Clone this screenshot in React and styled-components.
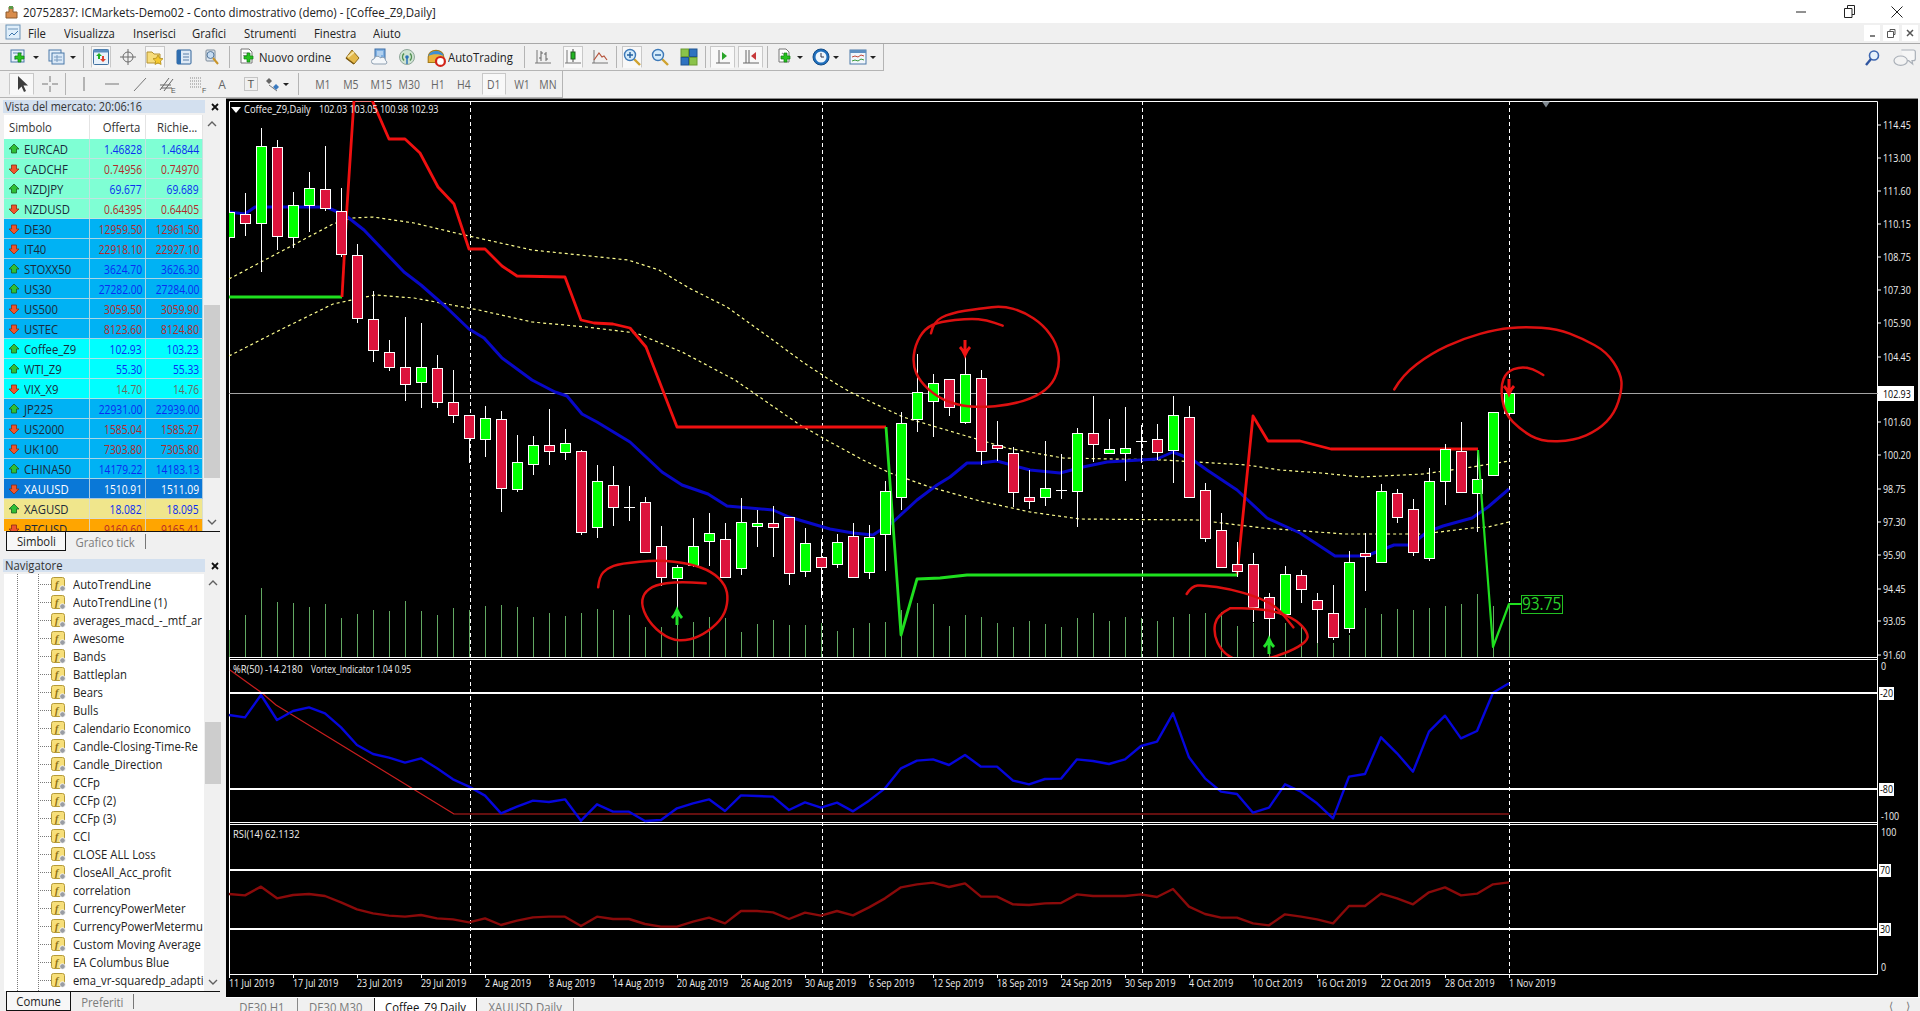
import React from "react";
import styled, { createGlobalStyle } from "styled-components";

const UI_FONT = `"Open Sans", "Noto Sans", sans-serif`;

const GlobalStyle = createGlobalStyle`
  html, body {
    margin: 0;
    padding: 0;
    background: #f0f0f0;
    font-family: ${UI_FONT};
    overflow: hidden;
  }
`;

/* ---------- data ---------- */

const WATCH = [
  ["EURCAD", "1.46828", "1.46844", "up", "mint"],
  ["CADCHF", "0.74956", "0.74970", "down", "mint"],
  ["NZDJPY", "69.677", "69.689", "up", "mint"],
  ["NZDUSD", "0.64395", "0.64405", "down", "mint"],
  ["DE30", "12959.50", "12961.50", "down", "sky"],
  ["IT40", "22918.10", "22927.10", "down", "sky"],
  ["STOXX50", "3624.70", "3626.30", "up", "sky"],
  ["US30", "27282.00", "27284.00", "up", "sky"],
  ["US500", "3059.50", "3059.90", "down", "sky"],
  ["USTEC", "8123.60", "8124.80", "down", "sky"],
  ["Coffee_Z9", "102.93", "103.23", "up", "aqua"],
  ["WTI_Z9", "55.30", "55.33", "up", "aqua"],
  ["VIX_X9", "14.70", "14.76", "flat", "aqua"],
  ["JP225", "22931.00", "22939.00", "up", "sky"],
  ["US2000", "1585.04", "1585.27", "down", "sky"],
  ["UK100", "7303.80", "7305.80", "down", "sky"],
  ["CHINA50", "14179.22", "14183.13", "up", "sky"],
  ["XAUUSD", "1510.91", "1511.09", "sel", "selected"],
  ["XAGUSD", "18.082", "18.095", "up", "khaki"],
  ["BTCUSD", "9160.60", "9165.41", "down", "orange"],
];

const NAV_ITEMS = [
  "AutoTrendLine", "AutoTrendLine (1)", "averages_macd_-_mtf_ar", "Awesome", "Bands", "Battleplan",
  "Bears", "Bulls", "Calendario Economico", "Candle-Closing-Time-Re", "Candle_Direction", "CCFp",
  "CCFp (2)", "CCFp (3)", "CCI", "CLOSE ALL Loss", "CloseAll_Acc_profit", "correlation",
  "CurrencyPowerMeter", "CurrencyPowerMetermu", "Custom Moving Average", "EA Columbus Blue",
  "ema_vr-squaredp_adapti", "Envelopes",
];

const barX = (i) => 229 + 16 * i;

// [high, bodyTop, bodyBottom, low, kind]
const CANDLES = [
  [205, 212, 237, 243, "g"], [193, 214, 223, 236, "r"], [128, 146, 223, 272, "g"], [140, 147, 236, 250, "r"],
  [192, 205, 237, 248, "g"], [172, 188, 205, 232, "g"], [146, 189, 208, 211, "r"], [188, 211, 254, 257, "r"],
  [244, 255, 318, 323, "r"], [291, 319, 350, 362, "r"], [340, 352, 367, 371, "r"], [317, 367, 384, 401, "r"],
  [323, 367, 382, 408, "g"], [355, 368, 402, 408, "r"], [370, 402, 415, 423, "r"], [415, 415, 438, 463, "r"],
  [406, 418, 439, 457, "g"], [411, 419, 488, 512, "r"], [435, 462, 489, 492, "g"], [436, 445, 464, 475, "g"],
  [409, 445, 451, 465, "r"], [429, 443, 452, 460, "g"], [450, 451, 532, 535, "r"], [465, 481, 527, 538, "g"],
  [466, 485, 507, 526, "r"], [486, 507, 507, 521, "d"], [497, 502, 552, 553, "r"], [526, 546, 577, 586, "r"],
  [565, 567, 578, 612, "g"], [518, 546, 565, 567, "g"], [513, 533, 541, 566, "g"], [523, 539, 577, 577, "r"],
  [498, 522, 568, 575, "g"], [510, 523, 526, 547, "g"], [506, 523, 527, 557, "r"], [517, 517, 573, 585, "r"],
  [528, 543, 571, 577, "g"], [539, 557, 567, 598, "r"], [534, 542, 564, 568, "g"], [523, 536, 577, 578, "r"],
  [525, 537, 572, 579, "g"], [481, 491, 534, 571, "g"], [412, 423, 497, 510, "g"], [354, 392, 419, 432, "g"],
  [374, 383, 401, 437, "g"], [379, 379, 407, 416, "r"], [350, 374, 422, 424, "g"], [370, 378, 451, 465, "r"],
  [421, 445, 448, 461, "r"], [447, 453, 492, 507, "r"], [470, 497, 501, 509, "r"], [441, 488, 497, 506, "g"],
  [454, 490, 490, 499, "d"], [428, 433, 491, 527, "g"], [396, 433, 444, 462, "r"], [419, 449, 453, 453, "g"],
  [407, 448, 453, 481, "g"], [425, 441, 441, 463, "d"], [424, 439, 452, 460, "r"], [396, 415, 450, 483, "g"],
  [406, 417, 497, 498, "r"], [483, 490, 538, 542, "r"], [513, 530, 567, 567, "r"], [542, 564, 571, 577, "r"],
  [553, 564, 607, 622, "r"], [593, 597, 618, 638, "r"], [566, 574, 614, 615, "g"], [570, 575, 589, 603, "r"],
  [593, 600, 609, 643, "r"], [585, 613, 637, 640, "r"], [551, 562, 628, 633, "g"], [533, 553, 556, 591, "r"],
  [484, 491, 562, 563, "g"], [489, 493, 517, 523, "r"], [499, 509, 552, 556, "r"], [468, 481, 558, 561, "g"],
  [444, 449, 481, 505, "g"], [422, 451, 492, 493, "r"], [450, 479, 493, 532, "g"], [412, 412, 475, 475, "g"],
  [388, 393, 413, 440, "g"],
];

const VOLUME = [
  630, 615, 588, 602, 603, 607, 604, 618, 614, 610, 611, 601, 611, 615, 608, 610, 606, 605, 607, 617, 613,
  616, 613, 609, 610, 615, 627, 627, 623, 622, 617, 618, 632, 624, 620, 625, 625, 623, 631, 628, 623, 622,
  610, 603, 604, 626, 615, 617, 623, 627, 621, 624, 627, 618, 613, 621, 617, 618, 621, 617, 614, 613, 612,
  626, 623, 620, 623, 625, 643, 643, 635, 608, 614, 609, 610, 608, 606, 604, 594, 606, 605,
];

const BLUE_MA = [
  [229, 212], [245, 214], [255, 207], [268, 207], [326, 207], [345, 215], [364, 230], [404, 272], [421, 285],
  [446, 307], [469, 329], [484, 338], [502, 358], [532, 380], [555, 392], [567, 396], [582, 414], [597, 422],
  [630, 442], [662, 472], [682, 485], [708, 494], [727, 506], [773, 510], [789, 517], [830, 529], [853, 533],
  [873, 535], [893, 522], [917, 500], [937, 485], [950, 477], [967, 463], [980, 463], [997, 461], [1030, 470],
  [1060, 473], [1083, 467], [1107, 462], [1157, 459], [1173, 452], [1193, 460], [1207, 470], [1237, 490],
  [1267, 518], [1300, 533], [1335, 556], [1366, 556], [1394, 545], [1411, 545], [1427, 532], [1443, 526],
  [1472, 518], [1488, 507], [1509, 489],
];

const YELLOW_UP = [
  [229, 279], [261, 262], [333, 224], [352, 218], [373, 217], [414, 223], [460, 234], [532, 250], [628, 260],
  [659, 270], [689, 288], [727, 307], [766, 335], [804, 363], [830, 380], [850, 392], [903, 417], [963, 435],
  [1007, 448], [1063, 458], [1163, 460], [1247, 465], [1280, 470], [1321, 473], [1361, 477], [1423, 474],
  [1472, 467], [1509, 461],
];

const YELLOW_LOW = [
  [229, 356], [280, 330], [333, 304], [375, 295], [414, 298], [479, 310], [532, 322], [586, 327], [636, 333],
  [682, 352], [735, 380], [800, 425], [830, 442], [863, 460], [890, 473], [930, 487], [980, 501], [1030, 512],
  [1080, 519], [1197, 520], [1263, 528], [1345, 534], [1423, 534], [1472, 528], [1488, 527], [1509, 522],
];

const RED_TRAIL_A = [
  [347, 207], [354, 100], [372, 100], [389, 139], [405, 139], [420, 153], [438, 187], [454, 204], [469, 249],
  [485, 249], [502, 266], [517, 276], [565, 277], [581, 320], [594, 323], [613, 324], [630, 328], [646, 347],
  [677, 427], [886, 427],
];
const RED_TRAIL_B = [
  [1237, 575], [1253, 416], [1268, 441], [1300, 441], [1331, 449], [1478, 449],
];
const GREEN_TRAIL_A = [[229, 297], [342, 297], [347, 207]];
const GREEN_TRAIL_B = [[886, 427], [901, 635], [917, 579], [940, 578], [967, 575], [1237, 575]];
const GREEN_TRAIL_C = [[1478, 450], [1493, 647], [1509, 604], [1521, 604]];

const WPR_Y = [
  195, 202, 135, 210, 183, 172, 190, 232, 285, 312, 323, 338, 325, 355, 388, 410, 437, 490, 470, 452, 456,
  448, 512, 463, 485, 485, 513, 510, 475, 460, 448, 483, 436, 438, 440, 480, 457, 473, 458, 484, 452, 415,
  355, 332, 328, 345, 315, 350, 350, 392, 403, 387, 386, 328, 333, 342, 328, 288, 275, 190, 322, 385, 425,
  432, 488, 473, 403, 425, 460, 505, 380, 372, 262, 310, 365, 245, 197, 265, 243, 128, 100,
];

const RSI_Y = [
  732, 736, 710, 745, 735, 732, 738, 757, 778, 790, 797, 800, 795, 805, 808, 817, 805, 825, 812, 802, 800,
  800, 828, 800, 807, 807, 822, 830, 830, 815, 803, 820, 783, 783, 787, 807, 788, 797, 783, 796, 772, 745,
  712, 703, 698, 711, 700, 740, 740, 763, 765, 760, 759, 733, 738, 738, 738, 733, 741, 717, 770, 792, 803,
  803, 820, 826, 793, 800, 808, 820, 768, 768, 731, 745, 763, 727, 712, 736, 731, 703, 697,
];

const PRICE_TICKS = [
  ["114.45", 125], ["113.00", 158], ["111.60", 191], ["110.15", 224], ["108.75", 257], ["107.30", 290],
  ["105.90", 323], ["104.45", 357], ["101.60", 422], ["100.20", 455], ["98.75", 489], ["97.30", 522],
  ["95.90", 555], ["94.45", 589], ["93.05", 621], ["91.60", 655],
];

const DATES = [
  "11 Jul 2019", "17 Jul 2019", "23 Jul 2019", "29 Jul 2019", "2 Aug 2019", "8 Aug 2019", "14 Aug 2019",
  "20 Aug 2019", "26 Aug 2019", "30 Aug 2019", "6 Sep 2019", "12 Sep 2019", "18 Sep 2019", "24 Sep 2019",
  "30 Sep 2019", "4 Oct 2019", "10 Oct 2019", "16 Oct 2019", "22 Oct 2019", "28 Oct 2019", "1 Nov 2019",
];

// crop coordinates read off the zoomed picture -> page coordinates
const crop = (ox, oy, sx, list) => list.map(([x, y]) => [ox + x / sx, oy + y / 3]);

const INK_1 = crop(230, 380, 2.613, [
  [962, 622], [965, 590], [985, 565], [1020, 550], [1120, 540], [1200, 550], [1260, 575], [1295, 615], [1302, 660],
  [1290, 710], [1250, 755], [1200, 782], [1150, 780], [1100, 735], [1075, 680], [1080, 640], [1110, 615], [1170, 605], [1243, 610],
]);
const INK_2 = crop(830, 290, 3, [
  [303, 130], [310, 95], [360, 70], [450, 55], [520, 48], [580, 65], [640, 105], [680, 160], [690, 220], [670, 280],
  [620, 320], [540, 345], [450, 352], [380, 345], [320, 320], [270, 275], [248, 225], [255, 165], [285, 115], [330, 95],
  [420, 85], [470, 90], [518, 107],
]);
const INK_3A = crop(830, 290, 3, [
  [1070, 912], [1085, 888], [1120, 885], [1200, 897], [1280, 920], [1340, 950], [1390, 1012],
]);
const INK_3B = crop(830, 290, 3, [
  [1200, 955], [1160, 975], [1150, 1030], [1175, 1085], [1225, 1115], [1300, 1110], [1380, 1085], [1430, 1055],
  [1435, 1030], [1400, 990], [1340, 965], [1270, 955], [1200, 955],
]);
const INK_4 = crop(1280, 290, 2.45, [
  [280, 298], [300, 255], [370, 190], [450, 145], [530, 118], [600, 110], [680, 117], [740, 145], [800, 185], [835, 250],
  [838, 300], [820, 370], [780, 420], [720, 452], [640, 455], [590, 420], [550, 370], [540, 290], [555, 245], [590, 230],
  [620, 237], [645, 255],
]);

const toPoints = (list) => list.map((p) => p.join(",")).join(" ");

const smoothPath = (list) => {
  let d = `M${list[0][0]} ${list[0][1]}`;
  for (let i = 1; i < list.length - 1; i++) {
    const mx = (list[i][0] + list[i + 1][0]) / 2;
    const my = (list[i][1] + list[i + 1][1]) / 2;
    d += ` Q${list[i][0]} ${list[i][1]} ${mx} ${my}`;
  }
  const last = list[list.length - 1];
  return `${d} L${last[0]} ${last[1]}`;
};

/* ---------- icons ---------- */

const Ico = ({ children, size = 18 }) => (
  <svg width={size} height={size} viewBox="0 0 18 18" fill="none" style={{ flex: "none" }}>
    {children}
  </svg>
);

const Plus = ({ x = 9, y = 9 }) => (
  <path
    d={`M${x + 3} ${y}h3v3h3v3h-3v3h-3v-3h-3v-3h3z`}
    fill="#27c21f"
    stroke="#0e7f12"
    strokeWidth=".7"
  />
);

const NewChartIcon = () => (
  <Ico>
    <rect x="1" y="2" width="13" height="12" fill="#e6f0fa" stroke="#4a78a8" />
    <path d="M3 5h9M5 8v4M9 7v4" stroke="#5a86b0" />
    <Plus x={5} y={5} />
  </Ico>
);
const ProfilesIcon = () => (
  <Ico>
    <rect x="1" y="2" width="12" height="11" fill="#e6f0fa" stroke="#4a78a8" />
    <rect x="4" y="5" width="12" height="11" fill="#d9e8f7" stroke="#4a78a8" />
    <path d="M6 9h8M6 12h8M9 7v7" stroke="#7a9cc0" />
  </Ico>
);
const WatchIcon = () => (
  <Ico>
    <rect x="1.5" y="1.5" width="15" height="15" rx="1" fill="#e8f2fb" stroke="#3f6f9f" />
    <rect x="1.5" y="1.5" width="15" height="3" fill="#5d8fc0" />
    <path d="M7 5l3 3H8v3H6V8H4z" fill="#20b020" />
    <path d="M11 14l-3-3h2V8h2v3h2z" fill="#e0402a" />
  </Ico>
);
const CrossIcon = ({ color = "#6c6c6c" }) => (
  <Ico>
    <circle cx="9" cy="9" r="5" stroke={color} />
    <path d="M9 1v16M1 9h16" stroke={color} />
  </Ico>
);
const FolderStarIcon = () => (
  <Ico>
    <path d="M1 4h5l2 2h6v9H1z" fill="#f7dd7c" stroke="#b49232" />
    <path d="M12 7l1.6 3.2 3.4.5-2.5 2.4.6 3.4-3.1-1.6-3 1.6.6-3.4L7 10.7l3.4-.5z" fill="#f5c92f" stroke="#a98415" strokeWidth=".7" />
  </Ico>
);
const TerminalIcon = () => (
  <Ico>
    <rect x="2" y="2" width="14" height="14" rx="1" fill="#dfeaf6" stroke="#2f6299" />
    <rect x="2" y="2" width="4" height="14" fill="#2f6eb0" />
    <path d="M8 6h6M8 9h6M8 12h6" stroke="#5a7fa8" />
  </Ico>
);
const TesterIcon = () => (
  <Ico>
    <rect x="3" y="2" width="9" height="11" rx="1" fill="#dde4ec" stroke="#7b8a99" />
    <circle cx="7.5" cy="7" r="3.5" fill="#c6dcf2" stroke="#55789c" />
    <path d="M10 10l5 6" stroke="#c9952a" strokeWidth="2" />
  </Ico>
);
const OrderIcon = () => (
  <Ico>
    <path d="M2 1h8l3 3v11H2z" fill="#fff" stroke="#777" />
    <path d="M4 5h6M4 7.5h6" stroke="#999" />
    <Plus x={5} y={5} />
  </Ico>
);
const EditorIcon = () => (
  <Ico>
    <path d="M9 2l7 8-5 6-8-6z" fill="#e4b84a" stroke="#8c6a1c" />
    <path d="M5 9l6-5" stroke="#f6e2a0" strokeWidth="2" />
    <path d="M3 10l8 6" stroke="#7c5a12" strokeWidth="1.5" />
  </Ico>
);
const CloudIcon = () => (
  <Ico>
    <rect x="4" y="1" width="10" height="10" fill="#7fb0e2" stroke="#3e6ea5" />
    <path d="M6 4h6M6 6h6M6 8h4" stroke="#e8f2fb" />
    <path d="M3 16a2.5 2.5 0 010-5 3.5 3.5 0 016.5-1 3 3 0 015 2.5 2 2 0 01.5 3.5z" fill="#f4f7fa" stroke="#8e9fb1" />
  </Ico>
);
const SignalIcon = () => (
  <Ico>
    <circle cx="9" cy="9" r="7.5" fill="#cfe3d1" stroke="#8fa69a" />
    <path d="M6 5.5a5 5 0 000 7M12 5.5a5 5 0 010 7" stroke="#4f8f4f" strokeWidth="1.5" />
    <circle cx="9" cy="9" r="1.8" fill="#2c72b8" />
    <path d="M9 10v6" stroke="#2c72b8" strokeWidth="1.5" />
  </Ico>
);
const AutoTradeIcon = () => (
  <Ico size={20}>
    <path d="M2 9a7 6 0 0114 0v5H2z" fill="#e9b33c" stroke="#a57a18" />
    <path d="M2 8c2-6 12-6 14 0-4-2-10-2-14 0z" fill="#3d8fd4" />
    <circle cx="13" cy="13" r="4" fill="#fff" stroke="#d2241a" strokeWidth="2" />
  </Ico>
);
const Axes = () => <path d="M3 2v13M1 15h16" stroke="#777" />;
const BarsIcon = () => (
  <Ico>
    <Axes />
    <path d="M7 3v10M5 10h2M7 5h2M12 4v9M10 6h2M12 11h2" stroke="#666" />
  </Ico>
);
const CandleIcon = () => (
  <Ico>
    <Axes />
    <path d="M9 1v13" stroke="#444" />
    <rect x="7" y="4" width="4" height="7" fill="#21b521" stroke="#1f5e1f" />
  </Ico>
);
const LineIcon = () => (
  <Ico>
    <Axes />
    <path d="M3 12l5-7 3 4 2-1 3 4" stroke="#b5533a" strokeWidth="1.2" />
  </Ico>
);
const ZoomIcon = ({ plus }) => (
  <Ico>
    <path d="M11 11l6 6" stroke="#cfa22f" strokeWidth="2.4" />
    <circle cx="7" cy="7" r="5.5" fill="#d5ecfb" stroke="#3d79b8" strokeWidth="1.4" />
    <path d={plus ? "M4 7h6M7 4v6" : "M4 7h6"} stroke="#2460a0" strokeWidth="1.4" />
  </Ico>
);
const TileIcon = () => (
  <Ico>
    <rect x="1" y="1" width="7.5" height="7.5" fill="#8bc34a" stroke="#6a9a32" />
    <rect x="9.5" y="1" width="7.5" height="7.5" fill="#2f73c0" stroke="#22568f" />
    <rect x="1" y="9.5" width="7.5" height="7.5" fill="#2f73c0" stroke="#22568f" />
    <rect x="9.5" y="9.5" width="7.5" height="7.5" fill="#8bc34a" stroke="#6a9a32" />
  </Ico>
);
const ScrollIcon = () => (
  <Ico>
    <path d="M5 2v13M2 15h14" stroke="#666" />
    <path d="M8 4l5 4-5 4z" fill="#2aa52a" />
  </Ico>
);
const ShiftIcon = () => (
  <Ico>
    <path d="M4 2v13M7 2v13M1 15h16" stroke="#666" />
    <path d="M14 4l-5 4 5 4z" fill="#c6383a" />
  </Ico>
);
const IndicatorIcon = () => (
  <Ico>
    <path d="M2 1h7l3 3v10H2z" fill="#fff" stroke="#777" />
    <path d="M5 6c1-3 2 3 3 0" stroke="#777" />
    <Plus x={4} y={5} />
  </Ico>
);
const ClockIcon = () => (
  <Ico>
    <circle cx="9" cy="9" r="8" fill="#1f6fbd" stroke="#134c86" />
    <circle cx="9" cy="9" r="5.5" fill="#eef6fc" />
    <path d="M9 5v4h3" stroke="#334" />
  </Ico>
);
const TemplateIcon = () => (
  <Ico>
    <rect x="1" y="2" width="16" height="14" fill="#f1f6fb" stroke="#4a78a8" />
    <rect x="1" y="2" width="16" height="3" fill="#5d8fc0" />
    <path d="M3 9l3-1 3 1 3-2 3 1" stroke="#c24a3a" />
    <path d="M3 13l3-1 3 1 3-2 3 1" stroke="#3a9a3a" />
  </Ico>
);
const ArrowToolIcon = () => (
  <Ico>
    <path d="M5 1v14l3.5-3.5 2.5 5.5 2-1-2.5-5.5H15z" fill="#3d3d3d" />
  </Ico>
);
const CrossThinIcon = () => (
  <Ico>
    <path d="M9 1v6M9 11v6M1 9h6M11 9h6" stroke="#777" />
  </Ico>
);
const VLineIcon = () => (
  <Ico>
    <path d="M9 2v14" stroke="#777" />
  </Ico>
);
const HLineIcon = () => (
  <Ico>
    <path d="M2 9h14" stroke="#777" />
  </Ico>
);
const TrendIcon = () => (
  <Ico>
    <path d="M3 16L15 3" stroke="#777" />
  </Ico>
);
const ChannelIcon = () => (
  <Ico>
    <path d="M2 15L11 3M6 16L15 4M2 10h11M3 13h11" stroke="#666" />
    <text x="13" y="17.5" fontSize="7" fill="#555" fontFamily="Liberation Sans">E</text>
  </Ico>
);
const FiboIcon = () => (
  <Ico>
    <path d="M1 3h12M1 6h12M1 9h12M1 12h12" stroke="#888" strokeDasharray="1 1" />
    <text x="13" y="17.5" fontSize="7" fill="#555" fontFamily="Liberation Sans">F</text>
  </Ico>
);
const TextBoxIcon = () => (
  <Ico>
    <path d="M2.5 2.5h13v13h-13z" stroke="#999" strokeDasharray="1 1" />
    <text x="5.500" y="13" fontSize="11" fill="#555" fontFamily="Liberation Sans">T</text>
  </Ico>
);
const ShapesIcon = () => (
  <Ico>
    <path d="M5 3l3 3-3 3-3-3z" fill="#666" />
    <path d="M5 10l8 6" stroke="#777" />
    <path d="M12 9l3 3-3 3-3-3z" fill="#3a7abf" />
  </Ico>
);
const AppIcon = () => (
  <Ico>
    <path d="M3 15V9h3V4h4v5h4v6z" fill="#d98c4c" stroke="#8a5a2e" />
    <path d="M6 3h4v3H6z" fill="#5a9a4a" />
  </Ico>
);
const ChartDocIcon = () => (
  <Ico>
    <rect x="1" y="1" width="14" height="14" fill="#dfeefa" stroke="#6d93b8" />
    <path d="M3 5h10" stroke="#6d93b8" />
    <path d="M4 12l3-3 2 2 4-4" stroke="#3f77ad" />
  </Ico>
);
const SearchIcon = () => (
  <Ico>
    <circle cx="11" cy="6.5" r="4.5" fill="#e6f1fb" stroke="#3d66b0" strokeWidth="1.6" />
    <path d="M8 10l-5 6" stroke="#2f55a0" strokeWidth="2.4" />
  </Ico>
);
const ChatIcon = () => (
  <Ico size={24}>
    <path d="M7 3h9a1.5 1.5 0 011.500 1.500v5A1.500 1.500 0 0116 11h-1l.5 2.5L12.500 11H9" stroke="#aab0b8" fill="#f6f6f6" strokeWidth=".9" />
    <ellipse cx="6.5" cy="11" rx="5" ry="3.5" fill="#f3f3f3" stroke="#aab0b8" strokeWidth=".9" />
  </Ico>
);
const TickArrow = ({ dir }) => (
  <svg width="12" height="12" viewBox="0 0 12 12" style={{ flex: "none" }}>
    {dir === "up" ? (
      <path d="M6 1l5 5H8.5v4h-5V6H1z" fill="#2fbf35" stroke="#1a5a22" strokeWidth=".8" />
    ) : (
      <path d="M6 11L1 6h2.5V2h5v4H11z" fill="#f0552b" stroke="#8a2c14" strokeWidth=".8" />
    )}
  </svg>
);
const ScriptIcon = () => (
  <svg width="15" height="15" viewBox="0 0 15 15" style={{ flex: "none" }}>
    <rect x=".5" y=".5" width="13" height="13" rx="2" fill="#f7df7a" stroke="#b59a38" />
    <text x="4" y="10.5" fontSize="10" fontStyle="italic" fontWeight="700" fontFamily="Liberation Serif" fill="#8a6d12">f</text>
    <circle cx="11.5" cy="11.5" r="2.8" fill="#9a9da3" stroke="#fff" strokeWidth=".8" />
  </svg>
);
const CloseMark = () => (
  <svg width="8" height="8" viewBox="0 0 8 8" style={{ flex: "none" }}>
    <path d="M1 1l6 6M7 1l-6 6" stroke="#111" strokeWidth="1.8" />
  </svg>
);
const Chevron = ({ up }) => (
  <svg width="10" height="7" viewBox="0 0 10 7">
    <path d={up ? "M1 6l4-4 4 4" : "M1 1l4 4 4-4"} stroke="#606060" strokeWidth="1.4" fill="none" />
  </svg>
);

/* ---------- window chrome ---------- */

// the screenshot's Tahoma is narrower than any installed face
const Cond = styled.span`
  display: inline-block;
  flex: none;
  white-space: nowrap;
  transform: scaleX(${(p) => p.$x || 0.87});
  transform-origin: ${(p) => p.$o || "left"} center;
`;

const Page = styled.div`
  width: 1920px;
  height: 1011px;
  display: flex;
  flex-direction: column;
  overflow: hidden;
  background: #f0f0f0;
  color: #1a1a1a;
  font-size: 13px;
`;

const TitleBar = styled.div`
  height: 23px;
  background: #fff;
  display: flex;
  align-items: center;
  padding-left: 3px;
  gap: 2px;
`;
const TitleText = styled.span`
  flex: 1;
  color: #222;
`;
const WinButton = styled.div`
  width: 46px;
  height: 23px;
  display: flex;
  align-items: center;
  justify-content: center;
`;

const MenuBar = styled.div`
  height: 21px;
  display: flex;
  align-items: center;
  padding-left: 5px;
  box-sizing: border-box;
  border-bottom: 1px solid #a8a8a8;
`;
const MenuIcon = styled.div`
  width: 23px;
  flex: none;
  display: flex;
`;
const MenuItem = styled.span`
  width: ${(p) => p.$w}px;
  flex: none;
  color: #222;
`;
const MdiButtons = styled.div`
  margin-left: auto;
  display: flex;
  gap: 3px;
  padding-right: 2px;
`;
const MdiButton = styled.div`
  width: 16px;
  height: 16px;
  background: #fff;
  display: flex;
  align-items: center;
  justify-content: center;
`;

const ToolRow = styled.div`
  height: ${(p) => p.$h}px;
  display: flex;
  align-items: center;
`;
const ToolGroup = styled.div`
  height: ${(p) => p.$h}px;
  width: ${(p) => p.$w}px;
  display: flex;
  align-items: center;
  padding-left: ${(p) => p.$pad}px;
  box-sizing: border-box;
  border-right: 1px solid #b4b4b4;
  border-bottom: 1px solid #b4b4b4;
`;
const Tool = styled.div`
  width: ${(p) => p.$w}px;
  margin-left: ${(p) => p.$ml || 0}px;
  height: 22px;
  flex: none;
  display: flex;
  align-items: center;
  justify-content: center;
  box-sizing: border-box;
  color: #666;
  font-size: 12px;
  ${(p) => p.$on && "background: #f8f8f8; border: 1px solid #c8c8c8; border-bottom-color: #f8f8f8;"}
`;
const ToolText = styled.div`
  width: ${(p) => p.$w}px;
  flex: none;
  margin-left: ${(p) => p.$ml || 0}px;
  color: #222;
`;
const Caret = styled.span`
  width: 0;
  height: 0;
  flex: none;
  margin-left: ${(p) => p.$ml || 2}px;
  border-left: 3px solid transparent;
  border-right: 3px solid transparent;
  border-top: 3px solid #222;
`;
const ToolSep = styled.div`
  width: 1px;
  height: 22px;
  background: #b4b4b4;
  flex: none;
  margin-left: ${(p) => p.$ml || 0}px;
`;
const RightTools = styled.div`
  margin-left: auto;
  display: flex;
  align-items: center;
  gap: 11px;
  padding-right: 4px;
`;

/* ---------- side panels ---------- */

const Body = styled.div`
  flex: 1;
  display: flex;
  min-height: 0;
`;
const Sidebar = styled.div`
  width: 226px;
  flex: none;
  display: flex;
  flex-direction: column;
  padding-top: 2px;
  box-sizing: border-box;
`;
const PanelTitle = styled.div`
  height: 13px;
  display: flex;
  align-items: center;
  justify-content: space-between;
  padding: 0 7px 0 4px;
  color: #333;
`;
const TitleFill = styled.span`
  flex: 1;
  margin-right: 6px;
  background: #d3e0ef;
  line-height: 13px;
  margin-left: -1px;
  padding-left: 2px;
`;
const WatchBox = styled.div`
  height: 416px;
  margin-top: 2px;
  display: flex;
  padding-left: 4px;
  overflow: hidden;
`;
const WatchTable = styled.div`
  width: 199px;
  flex: none;
`;
const WatchHeader = styled.div`
  height: 24px;
  background: #fff;
  display: grid;
  grid-template-columns: 86px 56px 57px;
  color: #333;
`;
const HeadCell = styled.div`
  display: flex;
  align-items: center;
  justify-content: ${(p) => (p.$left ? "flex-start" : "flex-end")};
  padding: 0 5px;
  border-right: 1px solid #e4e4e4;
`;
const WatchRow = styled.div`
  height: 20px;
  display: grid;
  grid-template-columns: 86px 56px 57px;
  box-sizing: border-box;
  border-bottom: 1px solid rgba(210, 220, 225, 0.8);
  background: ${(p) =>
    ({
      mint: "#7fffd4",
      sky: "#00b2f4",
      aqua: "#00ffff",
      selected: "#0a78d7",
      khaki: "#f0e68c",
      orange: "#ffa500",
    })[p.$band]};
  color: ${(p) => (p.$band === "selected" ? "#fff" : "#1b2a3a")};
`;
const SymbolCell = styled.div`
  display: flex;
  align-items: center;
  gap: 4px;
  padding-left: 4px;
  border-right: 1px solid rgba(210, 220, 225, 0.8);
`;
const PriceCell = styled.div`
  display: flex;
  align-items: center;
  justify-content: flex-end;
  padding-right: 3px;
  border-right: 1px solid rgba(210, 220, 225, 0.8);
  color: ${(p) => ({ up: "#0a2df0", down: "#b52a2a", flat: "#6b6b5f", sel: "#fff" })[p.$dir]};
`;
const VScroll = styled.div`
  width: 16px;
  margin-left: 1px;
  flex: none;
  display: flex;
  flex-direction: column;
  align-items: center;
  background: #f0f0f0;
  position: relative;
`;
const ScrollEnd = styled.div`
  height: 17px;
  display: flex;
  align-items: center;
  justify-content: center;
`;
const ScrollThumb = styled.div`
  position: absolute;
  left: 0;
  right: 0;
  top: ${(p) => p.$top}px;
  height: ${(p) => p.$h}px;
  background: #cdcdcd;
`;
const ScrollBottom = styled(ScrollEnd)`
  margin-top: auto;
`;
const PanelTabs = styled.div`
  height: ${(p) => p.$h}px;
  flex: none;
  margin: 0 6px;
  border-top: 1px solid #111;
  display: flex;
  box-sizing: border-box;
`;
const PanelTab = styled.div`
  width: ${(p) => p.$w}px;
  height: 19px;
  box-sizing: border-box;
  display: flex;
  align-items: center;
  justify-content: center;
  background: ${(p) => (p.$active ? "#f7f7f7" : "transparent")};
  color: ${(p) => (p.$active ? "#222" : "#7c7c7c")};
  ${(p) => p.$active && "border: 1px solid #111; border-top: none;"}
  ${(p) => p.$end && "border-right: 1px solid #777; height: 15px; margin-top: 2px;"}
`;
const NavTitle = styled(PanelTitle)`
  margin-top: 7px;
`;
const NavBox = styled.div`
  height: 417px;
  margin-top: 2px;
  display: flex;
  padding-left: 4px;
  overflow: hidden;
`;
const NavList = styled.div`
  width: 200px;
  flex: none;
  background: #fff;
  overflow: hidden;
  position: relative;
  padding-top: 1px;
`;
const NavGuide = styled.div`
  position: absolute;
  top: 0;
  bottom: 0;
  left: ${(p) => p.$x}px;
  border-left: 1px dotted #7a7a7a;
`;
const NavRow = styled.div`
  height: 18px;
  display: flex;
  align-items: center;
  padding-left: 47px;
  color: #222;
  white-space: nowrap;
  position: relative;
  &::before {
    content: "";
    position: absolute;
    left: 34px;
    width: 13px;
    border-top: 1px dotted #7a7a7a;
  }
`;
const NavLabel = styled(Cond)`
  margin-left: 7px;
`;

/* ---------- chart ---------- */

const ChartColumn = styled.div`
  flex: 1;
  display: flex;
  flex-direction: column;
  min-width: 0;
`;
const ChartFrame = styled.div`
  height: 899px;
  flex: none;
  background: #000;
  margin-right: 2px;
  border-top: 1px solid #8a8a8a;
  box-sizing: border-box;
`;
const ChartSvg = styled.svg`
  display: block;
  width: 100%;
  height: 100%;
  font-family: ${UI_FONT};
`;
const ChartTabs = styled.div`
  flex: 1;
  display: flex;
  border-top: 1px solid #fff;
  background: #f0f0f0;
  overflow: hidden;
`;
const ChartTab = styled.div`
  width: ${(p) => p.$w}px;
  flex: none;
  box-sizing: border-box;
  height: 20px;
  display: flex;
  justify-content: center;
  color: ${(p) => (p.$active ? "#111" : "#7a7a7a")};
  background: ${(p) => (p.$active ? "#fff" : "transparent")};
  ${(p) => p.$active && "border-left: 1px solid #222; border-right: 1px solid #222;"}
  ${(p) => p.$divider && "border-right: 1px solid #888;"}
`;
const TabArrows = styled.div`
  margin-left: auto;
  display: flex;
  gap: 13px;
  padding-right: 10px;
  color: #777;
  font-size: 11px;
`;

const ChartText = styled.text`
  font-size: ${(p) => p.$size || 11}px;
  fill: ${(p) => p.$fill || "#f0f0f0"};
`;

// chart text, squeezed like the rest of the screenshot
const Label = ({ x, y, sx = 0.81, size, fill, children }) => (
  <ChartText transform={`translate(${x} ${y}) scale(${sx} 1)`} $size={size} $fill={fill}>
    {children}
  </ChartText>
);

const Dashed = ({ x }) => (
  <line x1={x + 0.5} x2={x + 0.5} y1={101} y2={974} stroke="#fff" strokeDasharray="4 3" />
);

const Level = ({ y, label, right }) => (
  <>
    <line x1={229} x2={1878} y1={y} y2={y} stroke="#fff" strokeWidth="2" />
    <rect x={1879} y={y - 6} width={right} height={13} fill="#fff" />
    <Label x={1880} y={y + 4} fill="#000">{label}</Label>
  </>
);

const Candle = ({ i, data }) => {
  const [high, top, bottom, low, kind] = data;
  const x = barX(i);
  return (
    <g shapeRendering="crispEdges">
      <line x1={x + 0.5} x2={x + 0.5} y1={high} y2={low} stroke="#fff" />
      {kind === "d" ? (
        <line x1={x - 5} x2={x + 6} y1={top + 0.5} y2={top + 0.5} stroke="#fff" />
      ) : (
        <rect
          x={x - 4.5}
          y={top + 0.5}
          width={10}
          height={bottom - top}
          fill={kind === "g" ? "#00ff00" : "#dc143c"}
          stroke="#fff"
        />
      )}
    </g>
  );
};

const MarkArrow = ({ x, y, up }) => {
  const color = up ? "#22e02a" : "#f01414";
  const d = up
    ? `M${x} ${y - 7}V${y + 8} M${x - 5} ${y + 1}Q${x - 2} ${y - 2} ${x} ${y - 7}Q${x + 2} ${y - 2} ${x + 5} ${y + 1}`
    : `M${x} ${y + 7}V${y - 8} M${x - 5} ${y - 1}Q${x - 2} ${y + 2} ${x} ${y + 7}Q${x + 2} ${y + 2} ${x + 5} ${y - 1}`;
  return <path d={d} stroke={color} strokeWidth="3" fill="none" />;
};

const Ink = ({ points }) => (
  <path d={smoothPath(points)} fill="none" stroke="#dc1010" strokeWidth="2.5" strokeLinecap="round" />
);

const Line = ({ points, color, width = 2, dash }) => (
  <polyline
    points={toPoints(points)}
    fill="none"
    stroke={color}
    strokeWidth={width}
    strokeDasharray={dash}
    strokeLinejoin="round"
  />
);

const Chart = () => (
  <ChartSvg viewBox="226 99 1692 898" preserveAspectRatio="none">
    <defs>
      <clipPath id="mainPane">
        <rect x="229" y="101" width="1649" height="556" />
      </clipPath>
    </defs>

    {/* panes */}
    <path
      d="M229.5 101.5H1877.5V974.5H229.5ZM229 657.5H1878M229 659.5H1878M229 822.5H1878M229 824.5H1878"
      stroke="#fff"
      fill="none"
    />
    <path d="M1542 101.5h8l-4 6z" fill="#7f8890" />

    {[470, 822, 1142, 1509].map((x) => (
      <Dashed key={x} x={x} />
    ))}

    {/* volume */}
    {VOLUME.map((y, i) => (
      <line key={i} x1={barX(i) + 0.5} x2={barX(i) + 0.5} y1={y} y2={657} stroke="#62a862" shapeRendering="crispEdges" />
    ))}

    <line x1="229" x2="1878" y1="393.5" y2="393.5" stroke="#a4a4a4" />

    <g clipPath="url(#mainPane)">
      <Line points={YELLOW_UP} color="#ffff90" width={1.2} dash="3 3" />
      <Line points={YELLOW_LOW} color="#ffff90" width={1.2} dash="3 3" />
      <Line points={BLUE_MA} color="#0808c8" width={3} />
      <Line points={RED_TRAIL_A} color="#f01010" width={2.8} />
      <Line points={RED_TRAIL_B} color="#f01010" width={2.8} />
      <Line points={GREEN_TRAIL_A.slice(0, 2)} color="#1fe01f" width={2.8} />
      <Line points={GREEN_TRAIL_A.slice(1)} color="#f01010" width={2.8} />
      <Line points={GREEN_TRAIL_B} color="#1fe01f" width={2.8} />
      {CANDLES.map((c, i) => (
        <Candle key={i} i={i} data={c} />
      ))}
      <Line points={GREEN_TRAIL_C} color="#1fe01f" width={2.2} />
      <MarkArrow x={677} y={617} up />
      <MarkArrow x={1269} y={646} up />
      <MarkArrow x={965} y={348} />
      <MarkArrow x={1509} y={387} />
      <Ink points={INK_1} />
      <Ink points={INK_2} />
      <Ink points={INK_3A} />
      <Ink points={INK_3B} />
      <Ink points={INK_4} />
    </g>
    <rect x="1521.5" y="595.5" width="41" height="18" fill="none" stroke="#22c022" />
    <Label x={1522} y={610} sx={0.88} size={17.5} fill="#2ad02a">93.75</Label>

    <path d="M231 107h10l-5 6z" fill="#fff" />
    <Label x={244} y={113} sx={0.85}>Coffee_Z9,Daily</Label>
    <Label x={319} y={113} sx={0.82}>102.03 103.05 100.98 102.93</Label>

    {/* price axis */}
    {PRICE_TICKS.map(([label, y]) => (
      <g key={label}>
        <line x1="1878" x2="1881" y1={y} y2={y} stroke="#fff" />
        <Label x={1883} y={y + 4}>{label}</Label>
      </g>
    ))}
    <rect x="1878" y="386" width="36" height="15" fill="#fff" />
    <Label x={1883} y={398} fill="#000">102.93</Label>

    {/* %R window */}
    <Label x={233} y={673} sx={0.85}>%R(50) -14.2180</Label>
    <Label x={311} y={673} sx={0.75}>Vortex_Indicator 1.04 0.95</Label>
    <Line
      points={[[230, 670], [262, 693], [276, 705], [454, 814], [1509, 814]]}
      color="#c81e1e"
      width={1.2}
    />
    <Line points={WPR_Y.map((y, i) => [barX(i), 650 + y / 3])} color="#0606dc" width={2.4} />
    <Label x={1881} y={670}>0</Label>
    <Level y={693} label="-20" right={15} />
    <Level y={789} label="-80" right={15} />
    <Label x={1881} y={820}>-100</Label>

    {/* RSI window */}
    <Label x={233} y={838} sx={0.85}>RSI(14) 62.1132</Label>
    <Line points={RSI_Y.map((y, i) => [barX(i), 650 + y / 3])} color="#8a0a0a" width={2.4} />
    <Label x={1881} y={836}>100</Label>
    <Level y={870} label="70" right={12} />
    <Level y={929} label="30" right={12} />
    <Label x={1881} y={971}>0</Label>

    {/* time axis */}
    {DATES.map((label, i) => (
      <g key={label}>
        <line x1={barX(i * 4) + 0.5} x2={barX(i * 4) + 0.5} y1="974" y2="978" stroke="#fff" />
        <Label x={barX(i * 4)} y={987}>{label}</Label>
      </g>
    ))}
  </ChartSvg>
);

/* ---------- page ---------- */

const App = () => (
  <Page>
    <GlobalStyle />
    <TitleBar>
      <AppIcon />
      <TitleText>
        <Cond $x={0.88}>20752837: ICMarkets-Demo02 - Conto dimostrativo (demo) - [Coffee_Z9,Daily]</Cond>
      </TitleText>
      <WinButton>
        <svg width="10" height="2"><path d="M0 1h10" stroke="#222" /></svg>
      </WinButton>
      <WinButton>
        <svg width="11" height="13" viewBox="0 0 11 13" fill="none">
          <path d="M3.5 3V.5h7v9H8M.5 3.5h7.5v9H.5z" stroke="#222" />
        </svg>
      </WinButton>
      <WinButton>
        <svg width="12" height="12"><path d="M.5.5l11 11M11.5.5l-11 11" stroke="#222" /></svg>
      </WinButton>
    </TitleBar>

    <MenuBar>
      <MenuIcon><ChartDocIcon /></MenuIcon>
      <MenuItem $w={36}><Cond>File</Cond></MenuItem>
      <MenuItem $w={69}><Cond>Visualizza</Cond></MenuItem>
      <MenuItem $w={59}><Cond>Inserisci</Cond></MenuItem>
      <MenuItem $w={52}><Cond>Grafici</Cond></MenuItem>
      <MenuItem $w={70}><Cond>Strumenti</Cond></MenuItem>
      <MenuItem $w={59}><Cond>Finestra</Cond></MenuItem>
      <MenuItem $w={40}><Cond>Aiuto</Cond></MenuItem>
      <MdiButtons>
        <MdiButton>
          <svg width="8" height="8"><path d="M2 7h5" stroke="#555" strokeWidth="1.5" /></svg>
        </MdiButton>
        <MdiButton>
          <svg width="9" height="9" fill="none"><path d="M3 2V.5h5v5H7M.5 2.5h6v6h-6z" stroke="#555" /></svg>
        </MdiButton>
        <MdiButton>
          <svg width="8" height="8"><path d="M1 1l6 6M7 1L1 7" stroke="#555" strokeWidth="1.5" /></svg>
        </MdiButton>
      </MdiButtons>
    </MenuBar>

    <ToolRow $h={27}>
      <ToolGroup $h={27} $w={884} $pad={10}>
        <Tool $w={18}><NewChartIcon /></Tool>
        <Caret $ml={5} />
        <Tool $w={18} $ml={9}><ProfilesIcon /></Tool>
        <Caret $ml={4} />
        <ToolSep $ml={7} />
        <Tool $w={20} $on $ml={7}><WatchIcon /></Tool>
        <Tool $w={20} $ml={7}><CrossIcon /></Tool>
        <Tool $w={20} $on $ml={7}><FolderStarIcon /></Tool>
        <Tool $w={18} $ml={10}><TerminalIcon /></Tool>
        <Tool $w={18} $ml={10}><TesterIcon /></Tool>
        <ToolSep $ml={8} />
        <Tool $w={18} $ml={9}><OrderIcon /></Tool>
        <ToolText $w={73} $ml={2}><Cond>Nuovo ordine</Cond></ToolText>
        <Tool $w={18} $ml={11}><EditorIcon /></Tool>
        <Tool $w={18} $ml={10}><CloudIcon /></Tool>
        <Tool $w={18} $ml={9}><SignalIcon /></Tool>
        <Tool $w={20} $ml={10}><AutoTradeIcon /></Tool>
        <ToolText $w={66} $ml={2}><Cond>AutoTrading</Cond></ToolText>
        <ToolSep $ml={10} />
        <Tool $w={16} $ml={10}><BarsIcon /></Tool>
        <Tool $w={20} $on $ml={12}><CandleIcon /></Tool>
        <Tool $w={16} $ml={9}><LineIcon /></Tool>
        <ToolSep $ml={8} />
        <Tool $w={20} $on $ml={5}><ZoomIcon plus /></Tool>
        <Tool $w={18} $ml={9}><ZoomIcon /></Tool>
        <Tool $w={18} $ml={11}><TileIcon /></Tool>
        <ToolSep $ml={7} />
        <Tool $w={25} $on $ml={4}><ScrollIcon /></Tool>
        <Tool $w={25} $on $ml={3}><ShiftIcon /></Tool>
        <ToolSep $ml={4} />
        <Tool $w={18} $ml={9}><IndicatorIcon /></Tool>
        <Caret $ml={2} />
        <Tool $w={18} $ml={9}><ClockIcon /></Tool>
        <Caret $ml={3} />
        <Tool $w={18} $ml={10}><TemplateIcon /></Tool>
        <Caret $ml={3} />
      </ToolGroup>
      <RightTools>
        <SearchIcon />
        <ChatIcon />
      </RightTools>
    </ToolRow>

    <ToolRow $h={27}>
      <ToolGroup $h={27} $w={563} $pad={9}>
        <Tool $w={25} $on><ArrowToolIcon /></Tool>
        <Tool $w={18} $ml={7}><CrossThinIcon /></Tool>
        <ToolSep $ml={6} />
        <Tool $w={18} $ml={9}><VLineIcon /></Tool>
        <Tool $w={18} $ml={10}><HLineIcon /></Tool>
        <Tool $w={18} $ml={10}><TrendIcon /></Tool>
        <Tool $w={18} $ml={9}><ChannelIcon /></Tool>
        <Tool $w={18} $ml={13}><FiboIcon /></Tool>
        <Tool $w={10} $ml={10}>A</Tool>
        <Tool $w={18} $ml={15}><TextBoxIcon /></Tool>
        <Tool $w={18} $ml={4}><ShapesIcon /></Tool>
        <Caret $ml={1} />
        <ToolSep $ml={9} />
        <Tool $w={18} $ml={15}><Cond $o="center">M1</Cond></Tool>
        <Tool $w={18} $ml={10}><Cond $o="center">M5</Cond></Tool>
        <Tool $w={22} $ml={10}><Cond $o="center">M15</Cond></Tool>
        <Tool $w={22} $ml={6}><Cond $o="center">M30</Cond></Tool>
        <Tool $w={16} $ml={10}><Cond $o="center">H1</Cond></Tool>
        <Tool $w={16} $ml={10}><Cond $o="center">H4</Cond></Tool>
        <Tool $w={24} $on $ml={10}><Cond $o="center">D1</Cond></Tool>
        <Tool $w={18} $ml={7}><Cond $o="center">W1</Cond></Tool>
        <Tool $w={18} $ml={8}><Cond $o="center">MN</Cond></Tool>
      </ToolGroup>
    </ToolRow>

    <Body>
      <Sidebar>
        <PanelTitle>
          <TitleFill><Cond $x={0.84}>Vista del mercato: 20:06:16</Cond></TitleFill>
          <CloseMark />
        </PanelTitle>
        <WatchBox>
          <WatchTable>
            <WatchHeader>
              <HeadCell $left><Cond>Simbolo</Cond></HeadCell>
              <HeadCell><Cond $o="right">Offerta</Cond></HeadCell>
              <HeadCell><Cond $o="right">Richie...</Cond></HeadCell>
            </WatchHeader>
            {WATCH.map(([name, bid, ask, dir, band]) => (
              <WatchRow key={name} $band={band}>
                <SymbolCell>
                  <TickArrow dir={dir === "up" ? "up" : "down"} />
                  <Cond>{name}</Cond>
                </SymbolCell>
                <PriceCell $dir={dir}><Cond $x={0.79} $o="right">{bid}</Cond></PriceCell>
                <PriceCell $dir={dir}><Cond $x={0.79} $o="right">{ask}</Cond></PriceCell>
              </WatchRow>
            ))}
          </WatchTable>
          <VScroll>
            <ScrollEnd><Chevron up /></ScrollEnd>
            <ScrollThumb $top={190} $h={173} />
            <ScrollBottom><Chevron /></ScrollBottom>
          </VScroll>
        </WatchBox>
        <PanelTabs $h={21}>
          <PanelTab $w={60} $active><Cond $o="center">Simboli</Cond></PanelTab>
          <PanelTab $w={80} $end><Cond $o="center">Grafico tick</Cond></PanelTab>
        </PanelTabs>

        <NavTitle>
          <TitleFill><Cond $x={0.87}>Navigatore</Cond></TitleFill>
          <CloseMark />
        </NavTitle>
        <NavBox>
          <NavList>
            <NavGuide $x={13} />
            <NavGuide $x={34} />
            {NAV_ITEMS.map((item) => (
              <NavRow key={item}>
                <ScriptIcon />
                <NavLabel>{item}</NavLabel>
              </NavRow>
            ))}
          </NavList>
          <VScroll>
            <ScrollEnd><Chevron up /></ScrollEnd>
            <ScrollThumb $top={148} $h={62} />
            <ScrollBottom><Chevron /></ScrollBottom>
          </VScroll>
        </NavBox>
        <PanelTabs $h={20}>
          <PanelTab $w={65} $active><Cond $o="center">Comune</Cond></PanelTab>
          <PanelTab $w={63} $end><Cond $o="center">Preferiti</Cond></PanelTab>
        </PanelTabs>
      </Sidebar>

      <ChartColumn>
        <ChartFrame>
          <Chart />
        </ChartFrame>
        <ChartTabs>
          <ChartTab $w={72} $divider><Cond $o="center">DE30,H1</Cond></ChartTab>
          <ChartTab $w={76}><Cond $o="center">DE30,M30</Cond></ChartTab>
          <ChartTab $w={103} $active><Cond $o="center">Coffee_Z9,Daily</Cond></ChartTab>
          <ChartTab $w={97} $divider><Cond $o="center">XAUUSD,Daily</Cond></ChartTab>
          <TabArrows>
            <span>⟨</span>
            <span>⟩</span>
          </TabArrows>
        </ChartTabs>
      </ChartColumn>
    </Body>
  </Page>
);

export default App;
